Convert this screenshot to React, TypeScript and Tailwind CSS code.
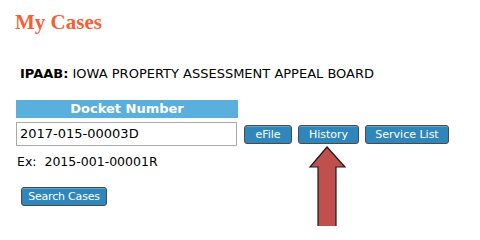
import React from "react";

const btn =
  "h-[19px] px-[5px] rounded-[3px] border border-[#4a4a4a] bg-[#2e86ba] text-white text-[11px] leading-none whitespace-nowrap flex items-center justify-center shadow-[inset_0_1px_0_rgba(255,255,255,0.25)]";

export default function App() {
  return (
    <div
      className="relative w-[480px] h-[226px] bg-white overflow-hidden"
      style={{ fontFamily: '"DejaVu Sans", Verdana, sans-serif' }}
    >
      <div className="pl-[15px] pt-[10px]">
        <h1
          className="text-[21px] leading-[24px] font-bold text-[#f5603a]"
          style={{ fontFamily: '"Liberation Serif", "Times New Roman", serif' }}
        >
          My Cases
        </h1>
      </div>
      <div className="pl-[20px] pt-[32px] text-[13px] leading-[16px] text-black">
        <span className="font-bold">IPAAB:</span> IOWA PROPERTY ASSESSMENT APPEAL BOARD
      </div>
      <div className="pl-[16px] pt-[18px]">
        <div className="w-[222px] h-[18px] bg-[#5aafdd] text-white font-bold text-[13px] leading-[18px] text-center">
          Docket Number
        </div>
        <div className="flex items-center mt-[4px] gap-[6px]">
          <div className="w-[221px] h-[24px] border border-[#a9a9a9] flex items-center pl-[3px] text-[13px] text-black">
            2017-015-00003D
          </div>
          <div className="flex gap-[6px] ml-[1px]">
            <div className={btn + " w-[48px]"}>eFile</div>
            <div className={btn + " w-[61px]"}>History</div>
            <div className={btn + " w-[84px]"}>Service List</div>
          </div>
        </div>
        <div className="mt-[9px] pl-[1px] text-[12.5px] leading-[14px] text-black whitespace-pre">
          {"Ex:  2015-001-00001R"}
        </div>
        <div className="mt-[18px] pl-[5px]">
          <div className={btn + " w-[86px] tracking-[-0.2px]"}>Search Cases</div>
        </div>
      </div>
      <svg
        className="absolute left-[305px] top-[143px]"
        width="45"
        height="90"
        viewBox="0 0 45 90"
      >
        <polygon
          points="22,4 40,24 31,24 31,88 13,88 13,24 5,24"
          fill="#c0504d"
          stroke="#1a1a1a"
          strokeWidth="1.2"
          strokeLinejoin="miter"
        />
      </svg>
    </div>
  );
}
